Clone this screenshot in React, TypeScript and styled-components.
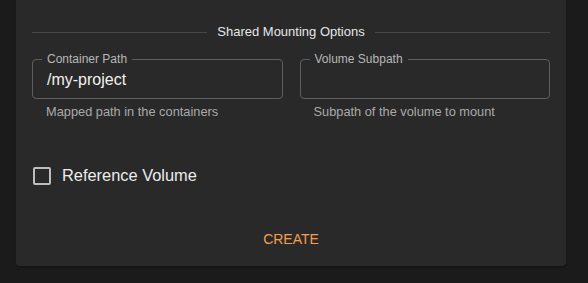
import styled, { createGlobalStyle } from 'styled-components'

const GlobalStyle = createGlobalStyle`
  body {
    margin: 0;
    background: #1b1b1b;
    font-family: "Liberation Sans", Arial, sans-serif;
  }
`

const Page = styled.div`
  width: 588px;
  height: 283px;
  padding: 0 22px 0 16px;
  box-sizing: border-box;
`

const Card = styled.div`
  background: #292929;
  border-radius: 0 0 4px 4px;
  box-shadow: 0 2px 2px rgba(0, 0, 0, 0.25);
  padding: 22px 16px 13px;
  height: 266px;
  box-sizing: border-box;
  display: flex;
  flex-direction: column;
`

const Divider = styled.div`
  display: flex;
  align-items: center;
  gap: 10px;
  color: #e6e6e6;
  font-size: 13px;
  line-height: 20px;
  &::before,
  &::after {
    content: '';
    flex: 1;
    border-top: 1px solid #464646;
  }
`

const FieldRow = styled.div`
  display: grid;
  grid-template-columns: 1fr 1fr;
  gap: 17px;
  margin-top: 17px;
`

const Field = styled.div`
  display: flex;
  flex-direction: column;
`

const Box = styled.div`
  position: relative;
  height: 40px;
  border: 1px solid #5e5e5e;
  border-radius: 4px;
  box-sizing: border-box;
  display: flex;
  align-items: center;
  padding: 0 14px;
`

const Label = styled.span`
  position: absolute;
  left: 9px;
  top: -8px;
  padding: 0 5px;
  background: #292929;
  color: #b8b8b8;
  font-size: 12px;
  line-height: 14px;
`

const Value = styled.span`
  color: #f2f2f2;
  font-size: 16px;
  margin-top: 1px;
`

const Helper = styled.span`
  color: #a9a9a9;
  font-size: 12.8px;
  line-height: 20px;
  margin: 3px 14px 0;
`

const CheckRow = styled.label`
  display: flex;
  align-items: center;
  gap: 11px;
  margin-top: 44px;
  padding-left: 1px;
  color: #ececec;
  font-size: 16.4px;
`

const CheckBox = styled.span`
  width: 18px;
  height: 18px;
  border: 2px solid #bdbdbd;
  border-radius: 2px;
  box-sizing: border-box;
`

const Actions = styled.div`
  margin-top: auto;
  display: flex;
  justify-content: center;
`

const Button = styled.button`
  background: none;
  border: none;
  color: #f59e4f;
  font-family: inherit;
  font-size: 14px;
  text-transform: uppercase;
  padding: 6px 8px;
  cursor: pointer;
`

const fields = [
  { id: 'path', label: 'Container Path', value: '/my-project', helper: 'Mapped path in the containers' },
  { id: 'sub', label: 'Volume Subpath', value: '', helper: 'Subpath of the volume to mount' },
]

function App() {
  return (
    <>
      <GlobalStyle />
      <Page>
        <Card>
          <Divider>Shared Mounting Options</Divider>
          <FieldRow>
            {fields.map((f) => (
              <Field key={f.id}>
                <Box>
                  <Label>{f.label}</Label>
                  <Value>{f.value}</Value>
                </Box>
                <Helper>{f.helper}</Helper>
              </Field>
            ))}
          </FieldRow>
          <CheckRow>
            <CheckBox />
            Reference Volume
          </CheckRow>
          <Actions>
            <Button>Create</Button>
          </Actions>
        </Card>
      </Page>
    </>
  )
}

export default App
